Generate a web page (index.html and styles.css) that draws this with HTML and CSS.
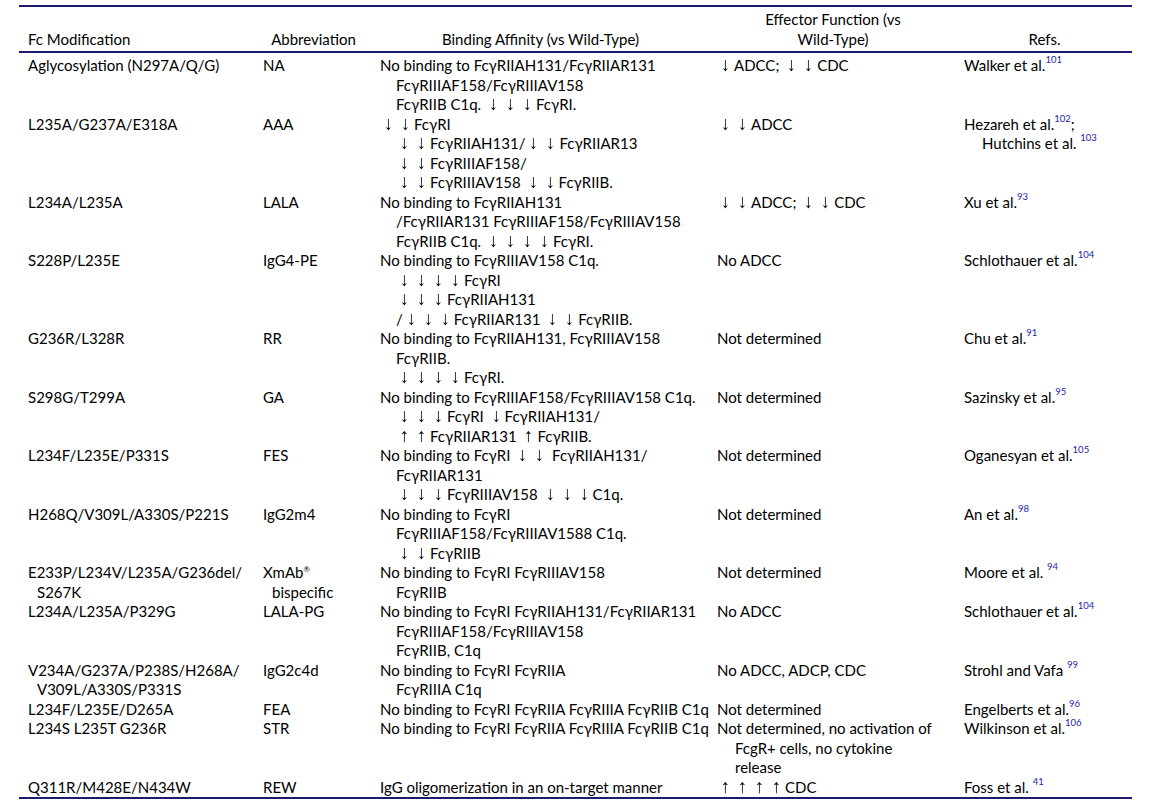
FILE: index.html
```html
<!DOCTYPE html>
<html lang="en">
<head>
<meta charset="utf-8">
<title>Fc modifications</title>
<link rel="stylesheet" href="styles.css">
</head>
<body>
<table class="tbl">
  <thead>
    <tr>
      <th class="h1">Fc Modification</th>
      <th class="h2">Abbreviation</th>
      <th class="h3">Binding Affinity (vs Wild-Type)</th>
      <th class="h4">Effector Function (vs<br>Wild-Type)</th>
      <th class="h5">Refs.</th>
    </tr>
  </thead>
  <tbody>
    <tr>
      <td class="c1">Aglycosylation (N297A/Q/G)</td>
      <td class="c2">NA</td>
      <td class="c3">No binding to FcγRIIAH131/FcγRIIAR131<br>FcγRIIIAF158/FcγRIIIAV158<br>FcγRIIB C1q. <span class="ar">↓</span><span class="ar">↓</span><span class="ar">↓</span>FcγRI.</td>
      <td class="c4"><span class="ar">↓</span>ADCC; <span class="ar">↓</span><span class="ar">↓</span>CDC</td>
      <td class="c5">Walker et al.<sup>101</sup></td>
    </tr>
    <tr>
      <td class="c1">L235A/G237A/E318A</td>
      <td class="c2">AAA</td>
      <td class="c3"><span class="ar">↓</span><span class="ar">↓</span>FcγRI<br><span class="ar">↓</span><span class="ar">↓</span>FcγRIIAH131/<span class="ar">↓</span><span class="ar">↓</span>FcγRIIAR13<br><span class="ar">↓</span><span class="ar">↓</span>FcγRIIIAF158/<br><span class="ar">↓</span><span class="ar">↓</span>FcγRIIIAV158 <span class="ar">↓</span><span class="ar">↓</span>FcγRIIB.</td>
      <td class="c4"><span class="ar">↓</span><span class="ar">↓</span>ADCC</td>
      <td class="c5">Hezareh et al.<sup>102</sup>;<br>Hutchins et al. <sup>103</sup></td>
    </tr>
    <tr>
      <td class="c1">L234A/L235A</td>
      <td class="c2">LALA</td>
      <td class="c3">No binding to FcγRIIAH131<br>/FcγRIIAR131 FcγRIIIAF158/FcγRIIIAV158<br>FcγRIIB C1q. <span class="ar">↓</span><span class="ar">↓</span><span class="ar">↓</span><span class="ar">↓</span>FcγRI.</td>
      <td class="c4"><span class="ar">↓</span><span class="ar">↓</span>ADCC; <span class="ar">↓</span><span class="ar">↓</span>CDC</td>
      <td class="c5">Xu et al.<sup>93</sup></td>
    </tr>
    <tr>
      <td class="c1">S228P/L235E</td>
      <td class="c2">IgG4-PE</td>
      <td class="c3">No binding to FcγRIIIAV158 C1q.<br><span class="ar">↓</span><span class="ar">↓</span><span class="ar">↓</span><span class="ar">↓</span>FcγRI<br><span class="ar">↓</span><span class="ar">↓</span><span class="ar">↓</span>FcγRIIAH131<br>/<span class="ar">↓</span><span class="ar">↓</span><span class="ar">↓</span>FcγRIIAR131 <span class="ar">↓</span><span class="ar">↓</span>FcγRIIB.</td>
      <td class="c4">No ADCC</td>
      <td class="c5">Schlothauer et al.<sup>104</sup></td>
    </tr>
    <tr>
      <td class="c1">G236R/L328R</td>
      <td class="c2">RR</td>
      <td class="c3">No binding to FcγRIIAH131, FcγRIIIAV158<br>FcγRIIB.<br><span class="ar">↓</span><span class="ar">↓</span><span class="ar">↓</span><span class="ar">↓</span>FcγRI.</td>
      <td class="c4">Not determined</td>
      <td class="c5">Chu et al.<sup>91</sup></td>
    </tr>
    <tr>
      <td class="c1">S298G/T299A</td>
      <td class="c2">GA</td>
      <td class="c3">No binding to FcγRIIIAF158/FcγRIIIAV158 C1q.<br><span class="ar">↓</span><span class="ar">↓</span><span class="ar">↓</span>FcγRI <span class="ar">↓</span>FcγRIIAH131/<br><span class="ar">↑</span><span class="ar">↑</span>FcγRIIAR131 <span class="ar">↑</span>FcγRIIB.</td>
      <td class="c4">Not determined</td>
      <td class="c5">Sazinsky et al.<sup>95</sup></td>
    </tr>
    <tr>
      <td class="c1">L234F/L235E/P331S</td>
      <td class="c2">FES</td>
      <td class="c3">No binding to FcγRI <span class="ar">↓</span><span class="ar">↓</span> FcγRIIAH131/<br>FcγRIIAR131<br><span class="ar">↓</span><span class="ar">↓</span><span class="ar">↓</span>FcγRIIIAV158 <span class="ar">↓</span><span class="ar">↓</span><span class="ar">↓</span>C1q.</td>
      <td class="c4">Not determined</td>
      <td class="c5">Oganesyan et al.<sup>105</sup></td>
    </tr>
    <tr>
      <td class="c1">H268Q/V309L/A330S/P221S</td>
      <td class="c2">IgG2m4</td>
      <td class="c3">No binding to FcγRI<br>FcγRIIIAF158/FcγRIIIAV1588 C1q.<br><span class="ar">↓</span><span class="ar">↓</span>FcγRIIB</td>
      <td class="c4">Not determined</td>
      <td class="c5">An et al.<sup>98</sup></td>
    </tr>
    <tr>
      <td class="c1">E233P/L234V/L235A/G236del/<br>S267K</td>
      <td class="c2">XmAb<span class="reg">®</span><br>bispecific</td>
      <td class="c3">No binding to FcγRI FcγRIIIAV158<br>FcγRIIB</td>
      <td class="c4">Not determined</td>
      <td class="c5">Moore et al. <sup>94</sup></td>
    </tr>
    <tr>
      <td class="c1">L234A/L235A/P329G</td>
      <td class="c2">LALA-PG</td>
      <td class="c3">No binding to FcγRI FcγRIIAH131/FcγRIIAR131<br>FcγRIIIAF158/FcγRIIIAV158<br>FcγRIIB, C1q</td>
      <td class="c4">No ADCC</td>
      <td class="c5">Schlothauer et al.<sup>104</sup></td>
    </tr>
    <tr>
      <td class="c1">V234A/G237A/P238S/H268A/<br>V309L/A330S/P331S</td>
      <td class="c2">IgG2c4d</td>
      <td class="c3">No binding to FcγRI FcγRIIA<br>FcγRIIIA C1q</td>
      <td class="c4">No ADCC, ADCP, CDC</td>
      <td class="c5">Strohl and Vafa <sup>99</sup></td>
    </tr>
    <tr>
      <td class="c1">L234F/L235E/D265A</td>
      <td class="c2">FEA</td>
      <td class="c3">No binding to FcγRI FcγRIIA FcγRIIIA FcγRIIB C1q</td>
      <td class="c4">Not determined</td>
      <td class="c5">Engelberts et al.<sup>96</sup></td>
    </tr>
    <tr>
      <td class="c1">L234S L235T G236R</td>
      <td class="c2">STR</td>
      <td class="c3">No binding to FcγRI FcγRIIA FcγRIIIA FcγRIIB C1q</td>
      <td class="c4">Not determined, no activation of<br>FcgR+ cells, no cytokine<br>release</td>
      <td class="c5">Wilkinson et al.<sup>106</sup></td>
    </tr>
    <tr>
      <td class="c1">Q311R/M428E/N434W</td>
      <td class="c2">REW</td>
      <td class="c3">IgG oligomerization in an on-target manner</td>
      <td class="c4"><span class="ar">↑</span><span class="ar">↑</span><span class="ar">↑</span><span class="ar">↑</span>CDC</td>
      <td class="c5">Foss et al. <sup>41</sup></td>
    </tr>
  </tbody>
</table>
</body>
</html>
```

FILE: styles.css
```css
body {
  margin: 0;
  background: #ffffff;
  color: #000000;
  font-family: Lato, "Noto Sans", sans-serif;
  font-size: 15px;
}

.tbl {
  margin: 5px 0 0 19px;
  width: 1113px;
  table-layout: fixed;
  border-collapse: separate;
  border-spacing: 0;
  line-height: 19.5px;
}

.tbl th,
.tbl td {
  box-sizing: border-box;
  padding: 0;
  text-align: left;
  vertical-align: top;
  white-space: nowrap;
  font-weight: normal;
}

/* header cells */
.tbl th {
  border-top: 2px solid #1b1b72;
  border-bottom: 2px solid #1b1b72;
  padding: 3px 0 2px 0;
  vertical-align: bottom;
  text-align: center;
}
.tbl th.h1 { width: 236px; text-align: left; padding-left: 9px; }
.tbl th.h2 { width: 117px; }
.tbl th.h3 { width: 337px; }
.tbl th.h4 { width: 248px; }
.tbl th.h5 { width: 175px; }

/* body cells: hanging indent for wrapped lines */
.tbl td.c1 { padding-left: 18px; text-indent: -9px; }
.tbl td.c2 { padding-left: 17px; text-indent: -9px; }
.tbl td.c3 { padding-left: 24px; text-indent: -16px; }
.tbl td.c4 { padding-left: 26px; text-indent: -18px; }
.tbl td.c5 { padding-left: 25px; text-indent: -18px; }

.tbl tbody tr:first-child td {
  padding-top: 3px;
}

.tbl tbody tr:last-child td {
  border-bottom: 2px solid #1b1b72;
}

.ar {
  display: inline-block;
  width: 17px;
  line-height: 10px;
  text-align: center;
  text-indent: 0;
  color: #000000;
  font-family: "Liberation Sans", sans-serif;
  font-size: 19px;
  will-change: transform;
}

sup {
  font-size: 9.5px;
  line-height: 0;
  vertical-align: 8px;
  color: #2424a6;
}

.reg {
  font-size: 8px;
  line-height: 0;
  vertical-align: 6px;
}
```
